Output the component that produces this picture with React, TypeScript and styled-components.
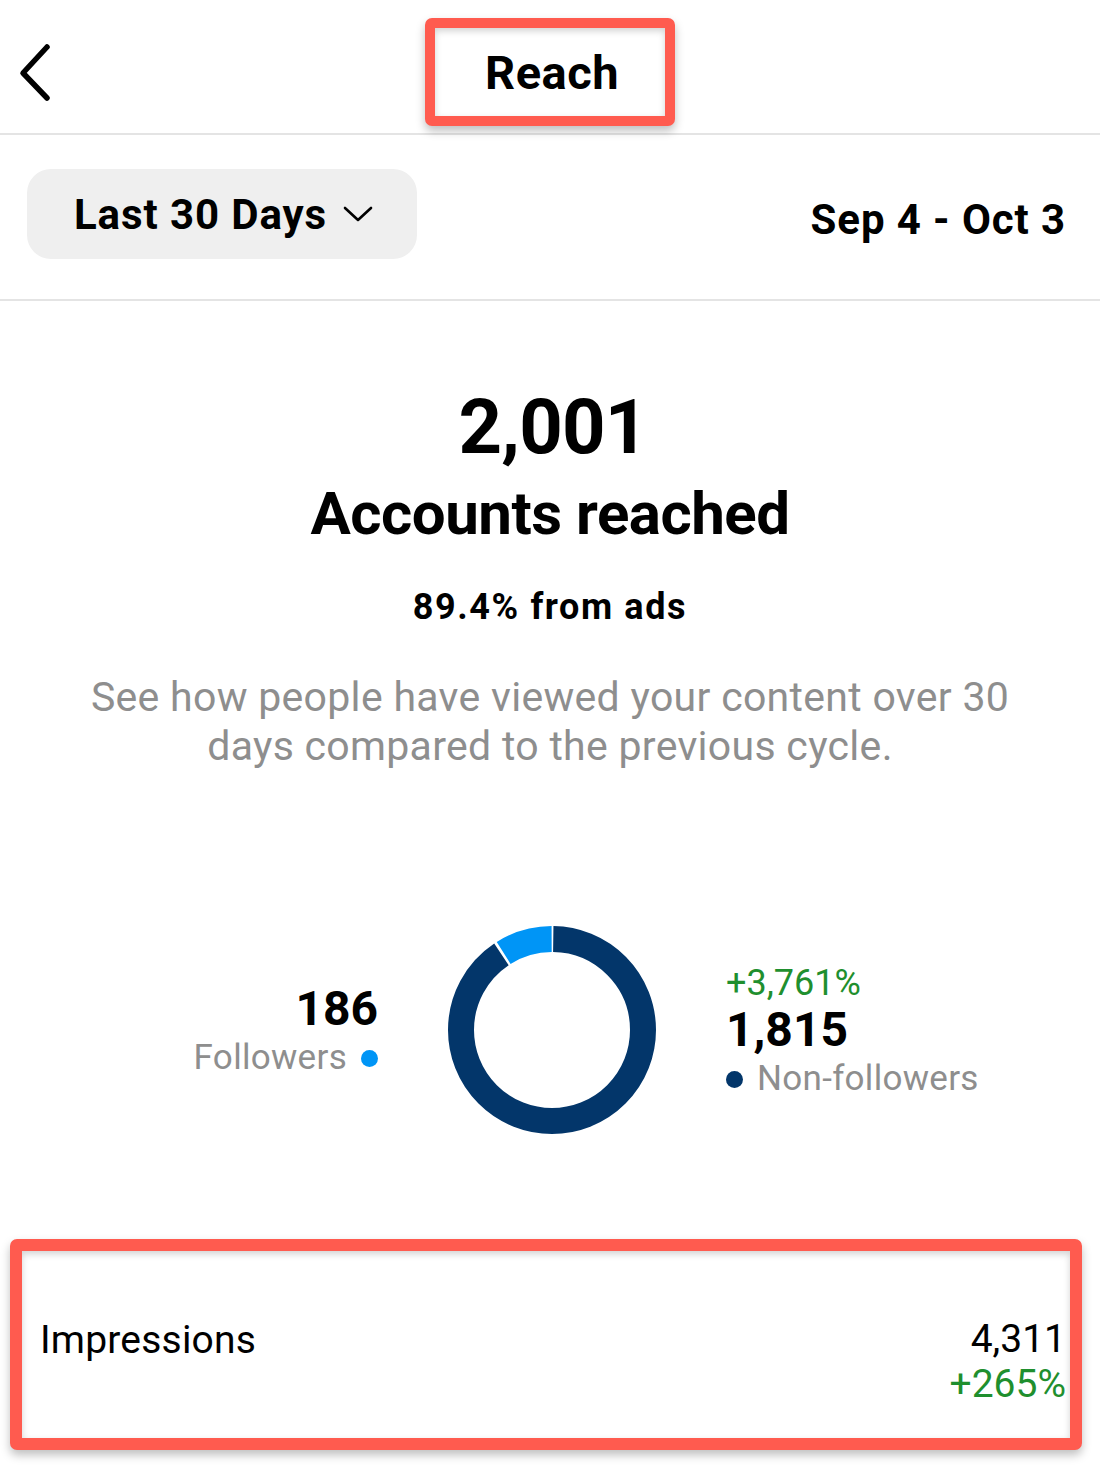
import React from 'react';
import styled, { createGlobalStyle } from 'styled-components';

const GlobalStyle = createGlobalStyle`
  * { box-sizing: border-box; }
  body {
    margin: 0;
    background: #ffffff;
    font-family: Roboto, "Liberation Sans", Arial, sans-serif;
    color: #000000;
  }
`;

const RED = '#ff5b4f';
const NAVY = '#03366a';
const BLUE = '#0095f6';
const GREEN = '#1f8f2e';
const GRAY = '#8e8e8e';

const Page = styled.main`
  width: 1100px;
  min-height: 1482px;
  background: #fff;
`;

const Header = styled.header`
  height: 135px;
  display: grid;
  grid-template-columns: 1fr auto 1fr;
  align-items: start;
  border-bottom: 2px solid #e4e4e4;
`;

const BackButton = styled.button`
  border: none;
  background: none;
  padding: 0;
  margin: 42px 0 0 16px;
  width: 40px;
  height: 60px;
  justify-self: start;
  cursor: pointer;
`;

const Highlight = styled.div<{ $thick: number }>`
  border: ${({ $thick }) => $thick}px solid ${RED};
  border-radius: 7px;
  box-shadow: 0 5px 10px rgba(0, 0, 0, 0.25), inset 0 3px 7px rgba(0, 0, 0, 0.18);
  background: #fff;
`;

const TitleBox = styled(Highlight)`
  margin-top: 18px;
  width: 250px;
  height: 108px;
  display: flex;
  align-items: center;
  justify-content: center;
`;

const Title = styled.h1`
  margin: 0 0 0 4px;
  font-size: 47px;
  font-weight: 700;
  letter-spacing: 0.5px;
`;

const FilterRow = styled.div`
  height: 166px;
  padding: 0 34px 0 27px;
  display: flex;
  align-items: center;
  justify-content: space-between;
  border-bottom: 2px solid #e4e4e4;
`;

const RangePill = styled.button`
  width: 390px;
  height: 90px;
  margin-top: -6px;
  border: none;
  border-radius: 24px;
  background: #efefef;
  display: flex;
  align-items: center;
  gap: 16px;
  padding: 0 0 0 47px;
  font-family: inherit;
  font-size: 42px;
  font-weight: 700;
  color: #000;
  letter-spacing: 0.9px;
  cursor: pointer;
`;

const DateRange = styled.span`
  font-size: 42px;
  font-weight: 700;
  letter-spacing: 0.9px;
  margin-top: 4px;
`;

const Summary = styled.section`
  text-align: center;
  padding-top: 86px;
`;

const BigNumber = styled.div`
  font-size: 76px;
  font-weight: 700;
  line-height: 80px;
  letter-spacing: -0.8px;
  padding-left: 6px;
`;

const Metric = styled.h2`
  margin: 12px 0 0;
  font-size: 60px;
  font-weight: 700;
  line-height: 70px;
  letter-spacing: -0.5px;
`;

const AdsShare = styled.div`
  margin-top: 38px;
  font-size: 36px;
  font-weight: 700;
  line-height: 40px;
  letter-spacing: 1.6px;
`;

const Description = styled.p`
  margin: 46px auto 0;
  width: 980px;
  font-size: 41px;
  line-height: 49px;
  color: ${GRAY};
  letter-spacing: 0.3px;
`;

const ChartRow = styled.section`
  margin-top: 155px;
  display: grid;
  grid-template-columns: 1fr 208px 1fr;
  column-gap: 70px;
  align-items: center;
  padding-left: 4px;
`;

const Side = styled.div<{ $align: 'left' | 'right' }>`
  display: flex;
  flex-direction: column;
  align-items: ${({ $align }) => ($align === 'right' ? 'flex-end' : 'flex-start')};
  padding-top: ${({ $align }) => ($align === 'right' ? '2px' : '4px')};
`;

const Change = styled.div`
  font-size: 36px;
  line-height: 40px;
  color: ${GREEN};
`;

const Count = styled.div`
  font-size: 48px;
  font-weight: 700;
  line-height: 54px;
`;

const Legend = styled.div`
  display: flex;
  align-items: center;
  gap: 14px;
  font-size: 35px;
  line-height: 44px;
  color: ${GRAY};
  letter-spacing: 0.3px;
`;

const Dot = styled.span<{ $color: string }>`
  width: 17px;
  height: 17px;
  border-radius: 50%;
  background: ${({ $color }) => $color};
  flex-shrink: 0;
`;

const ImpressionsBox = styled(Highlight)`
  margin: 105px 0 0 10px;
  width: 1072px;
  height: 211px;
  padding: 66px 4px 0 18px;
  display: flex;
  justify-content: space-between;
  align-items: flex-start;
  font-size: 39px;
`;

const ImpressionsLabel = styled.div`
  line-height: 46px;
  letter-spacing: 0.2px;
`;

const ImpressionsValue = styled.div`
  text-align: right;
  line-height: 45px;
`;

const Green = styled.div`
  color: ${GREEN};
`;

function Donut({ share }: { share: number }) {
  const r = 91;
  const c = 2 * Math.PI * r;
  const gap = 2.6;
  const light = c * share;
  const dark = c - light;
  return (
    <svg width="208" height="208" viewBox="0 0 208 208">
      <g transform="rotate(-90 104 104)">
        <circle
          cx="104"
          cy="104"
          r={r}
          fill="none"
          stroke={NAVY}
          strokeWidth="26"
          strokeDasharray={`${dark - gap} ${c}`}
          strokeDashoffset={-gap / 2}
        />
        <circle
          cx="104"
          cy="104"
          r={r}
          fill="none"
          stroke={BLUE}
          strokeWidth="26"
          strokeDasharray={`${light - gap} ${c}`}
          strokeDashoffset={-(dark + gap / 2)}
        />
      </g>
    </svg>
  );
}

export default function App() {
  return (
    <Page>
      <GlobalStyle />
      <Header>
        <BackButton aria-label="Back">
          <svg width="40" height="60" viewBox="0 0 40 60">
            <polyline
              points="31,5 7,31 31,56"
              fill="none"
              stroke="#000"
              strokeWidth="5.5"
              strokeLinecap="round"
              strokeLinejoin="round"
            />
          </svg>
        </BackButton>
        <TitleBox $thick={10}>
          <Title>Reach</Title>
        </TitleBox>
        <div />
      </Header>

      <FilterRow>
        <RangePill>
          Last 30 Days
          <svg width="30" height="18" viewBox="0 0 30 18">
            <polyline
              points="2,3 15,15 28,3"
              fill="none"
              stroke="#000"
              strokeWidth="2.6"
              strokeLinecap="round"
              strokeLinejoin="round"
            />
          </svg>
        </RangePill>
        <DateRange>Sep 4 - Oct 3</DateRange>
      </FilterRow>

      <Summary>
        <BigNumber>2,001</BigNumber>
        <Metric>Accounts reached</Metric>
        <AdsShare>89.4% from ads</AdsShare>
        <Description>
          See how people have viewed your content over 30 days compared to the previous cycle.
        </Description>
      </Summary>

      <ChartRow>
        <Side $align="right">
          <Count>186</Count>
          <Legend>
            Followers
            <Dot $color={BLUE} />
          </Legend>
        </Side>
        <Donut share={186 / 2001} />
        <Side $align="left">
          <Change>+3,761%</Change>
          <Count>1,815</Count>
          <Legend>
            <Dot $color={NAVY} />
            Non-followers
          </Legend>
        </Side>
      </ChartRow>

      <ImpressionsBox $thick={12}>
        <ImpressionsLabel>Impressions</ImpressionsLabel>
        <ImpressionsValue>
          <div>4,311</div>
          <Green>+265%</Green>
        </ImpressionsValue>
      </ImpressionsBox>
    </Page>
  );
}
